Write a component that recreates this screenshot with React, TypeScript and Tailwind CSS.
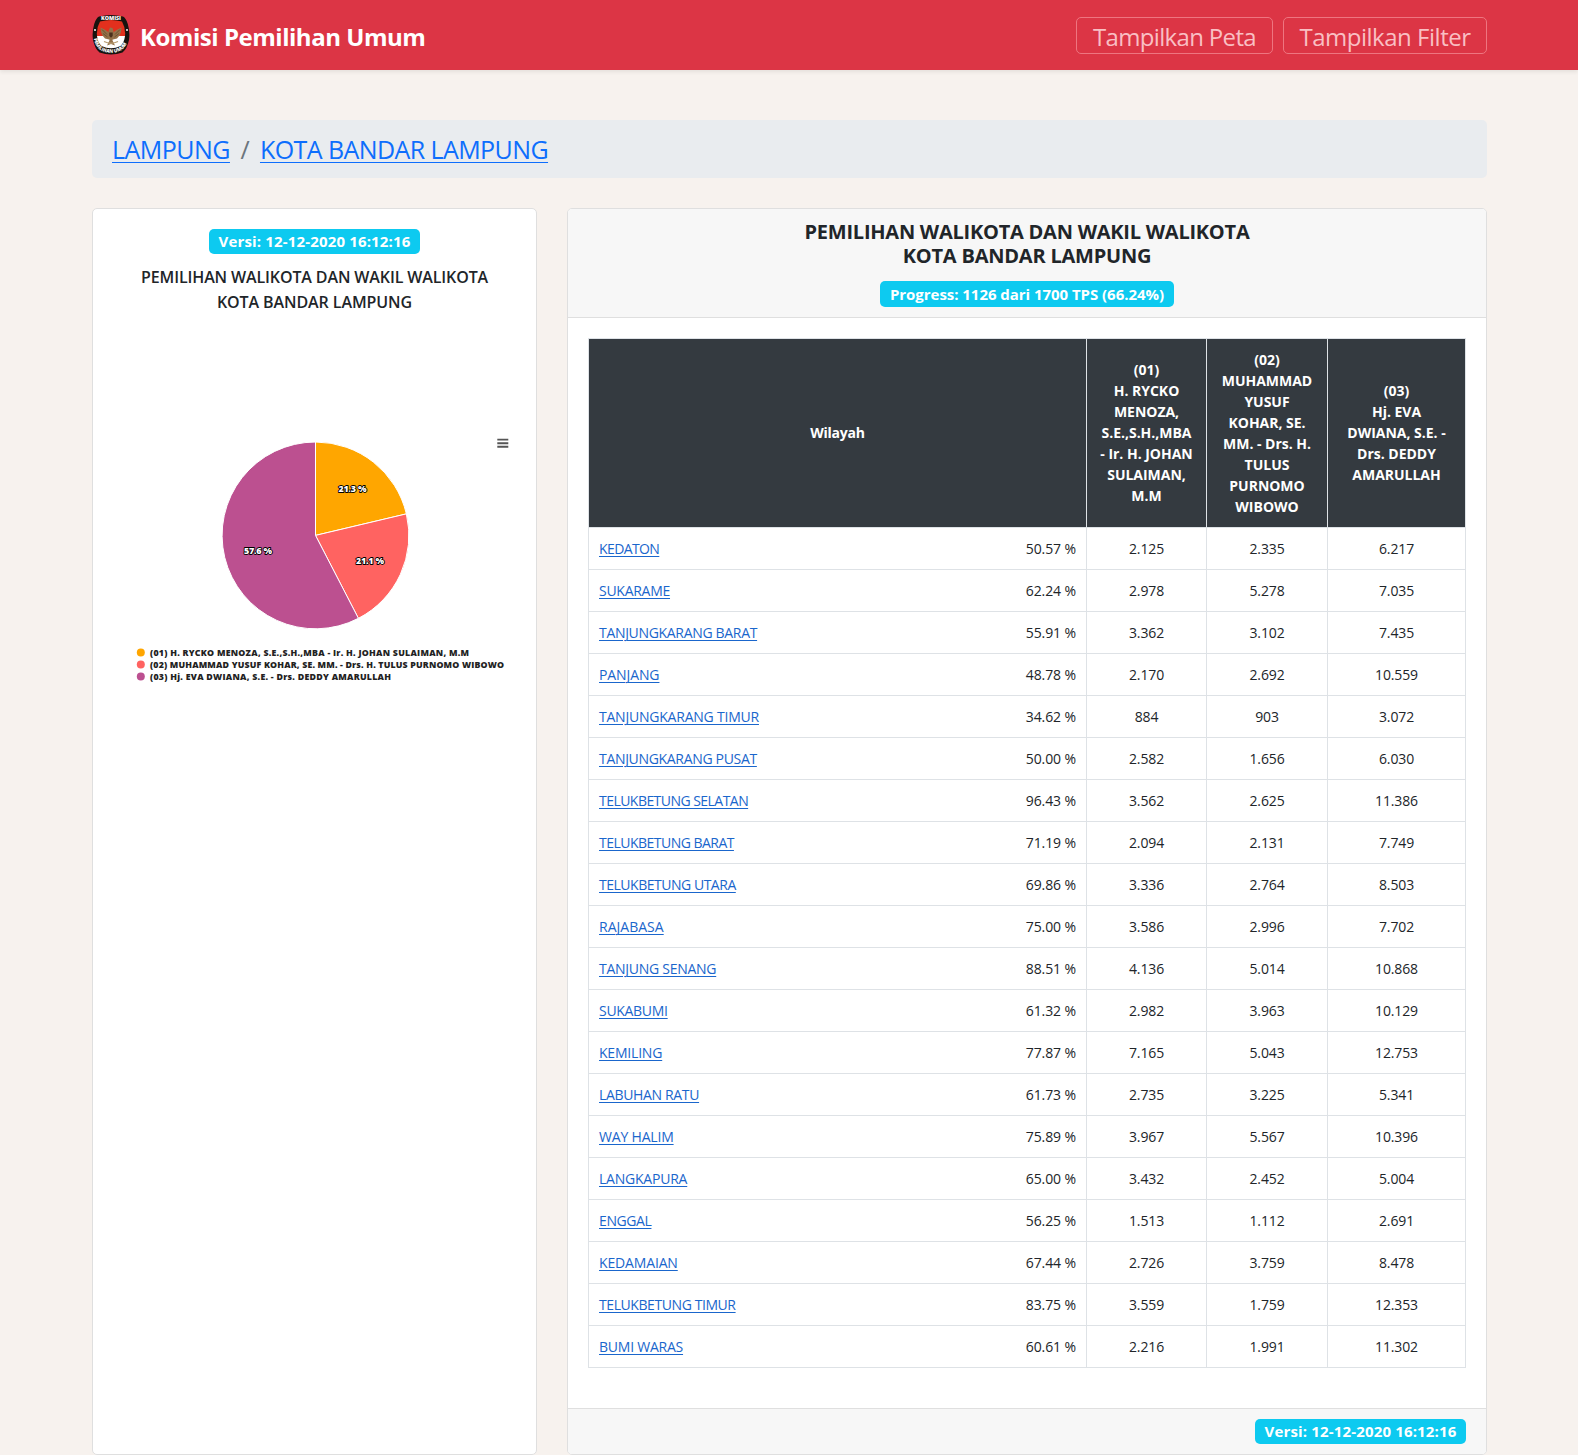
type Row = { name: string; track: string; progress: string; votes: string[] };

const rows: Row[] = [
  { name: 'KEDATON', track: 'tracking-[-0.6px]', progress: '50.57', votes: ['2.125', '2.335', '6.217'] },
  { name: 'SUKARAME', track: 'tracking-[-0.27px]', progress: '62.24', votes: ['2.978', '5.278', '7.035'] },
  { name: 'TANJUNGKARANG BARAT', track: 'tracking-[-0.32px]', progress: '55.91', votes: ['3.362', '3.102', '7.435'] },
  { name: 'PANJANG', track: 'tracking-[-0.1px]', progress: '48.78', votes: ['2.170', '2.692', '10.559'] },
  { name: 'TANJUNGKARANG TIMUR', track: 'tracking-[-0.22px]', progress: '34.62', votes: ['884', '903', '3.072'] },
  { name: 'TANJUNGKARANG PUSAT', track: 'tracking-[-0.32px]', progress: '50.00', votes: ['2.582', '1.656', '6.030'] },
  { name: 'TELUKBETUNG SELATAN', track: 'tracking-[-0.54px]', progress: '96.43', votes: ['3.562', '2.625', '11.386'] },
  { name: 'TELUKBETUNG BARAT', track: 'tracking-[-0.52px]', progress: '71.19', votes: ['2.094', '2.131', '7.749'] },
  { name: 'TELUKBETUNG UTARA', track: 'tracking-[-0.48px]', progress: '69.86', votes: ['3.336', '2.764', '8.503'] },
  { name: 'RAJABASA', track: 'tracking-[0.02px]', progress: '75.00', votes: ['3.586', '2.996', '7.702'] },
  { name: 'TANJUNG SENANG', track: 'tracking-[-0.27px]', progress: '88.51', votes: ['4.136', '5.014', '10.868'] },
  { name: 'SUKABUMI', track: 'tracking-[-0.3px]', progress: '61.32', votes: ['2.982', '3.963', '10.129'] },
  { name: 'KEMILING', track: 'tracking-[-0.2px]', progress: '77.87', votes: ['7.165', '5.043', '12.753'] },
  { name: 'LABUHAN RATU', track: 'tracking-[-0.34px]', progress: '61.73', votes: ['2.735', '3.225', '5.341'] },
  { name: 'WAY HALIM', track: 'tracking-[-0.18px]', progress: '75.89', votes: ['3.967', '5.567', '10.396'] },
  { name: 'LANGKAPURA', track: 'tracking-[-0.22px]', progress: '65.00', votes: ['3.432', '2.452', '5.004'] },
  { name: 'ENGGAL', track: 'tracking-[-0.4px]', progress: '56.25', votes: ['1.513', '1.112', '2.691'] },
  { name: 'KEDAMAIAN', track: 'tracking-[-0.15px]', progress: '67.44', votes: ['2.726', '3.759', '8.478'] },
  { name: 'TELUKBETUNG TIMUR', track: 'tracking-[-0.42px]', progress: '83.75', votes: ['3.559', '1.759', '12.353'] },
  { name: 'BUMI WARAS', track: 'tracking-[-0.23px]', progress: '60.61', votes: ['2.216', '1.991', '11.302'] },
];

const candidates = [
  ['(01)', 'H. RYCKO', 'MENOZA,', 'S.E.,S.H.,MBA', '- Ir. H. JOHAN', 'SULAIMAN,', 'M.M'],
  ['(02)', 'MUHAMMAD', 'YUSUF', 'KOHAR, SE.', 'MM. - Drs. H.', 'TULUS', 'PURNOMO', 'WIBOWO'],
  ['(03)', 'Hj. EVA', 'DWIANA, S.E. -', 'Drs. DEDDY', 'AMARULLAH'],
];

const slices = [
  {
    share: 21.3, color: '#ffa600', lx: 352.5, ly: 492.3, width: 319,
    label: '(01) H. RYCKO MENOZA, S.E.,S.H.,MBA - Ir. H. JOHAN SULAIMAN, M.M',
  },
  {
    share: 21.1, color: '#ff6361', lx: 370, ly: 564.3, width: 354,
    label: '(02) MUHAMMAD YUSUF KOHAR, SE. MM. - Drs. H. TULUS PURNOMO WIBOWO',
  },
  {
    share: 57.6, color: '#bc5090', lx: 258, ly: 554.3, width: 241,
    label: '(03) Hj. EVA DWIANA, S.E. - Drs. DEDDY AMARULLAH',
  },
];

const CX = 315.5;
const CY = 535.4;
const R = 93.4;

function point(percent: number) {
  const a = (percent / 100) * Math.PI * 2;
  return `${(CX + R * Math.sin(a)).toFixed(2)} ${(CY - R * Math.cos(a)).toFixed(2)}`;
}

function PieChart() {
  let start = 0;
  return (
    <svg viewBox="93 410 443 290" width="443" height="290" className="block">
      {slices.map((s) => {
        const from = start;
        start += s.share;
        return (
          <path
            key={s.color}
            d={`M${CX} ${CY}L${point(from)}A${R} ${R} 0 ${s.share > 50 ? 1 : 0} 1 ${point(start)}Z`}
            fill={s.color}
            stroke="#fff"
            strokeWidth="1"
            strokeLinejoin="round"
          />
        );
      })}
      {slices.map((s) => (
        <text
          key={s.color}
          x={s.lx}
          y={s.ly}
          textAnchor="middle"
          textLength="28"
          fontSize="9"
          fontWeight="800"
          fill="#fff"
          stroke="#000"
          strokeWidth="1.8"
          strokeLinejoin="round"
          paintOrder="stroke"
        >
          {s.share.toFixed(1)} %
        </text>
      ))}
      {slices.map((s, i) => (
        <g key={s.color}>
          <circle cx="140.8" cy={652.4 + i * 12.1} r="4" fill={s.color} />
          <text x="150" y={656.2 + i * 12} textLength={s.width} fontSize="8.8" fontWeight="800" fill="#222">
            {s.label}
          </text>
        </g>
      ))}
      <path d="M497.300 439.600h11M497.300 443.200h11M497.300 446.800h11" stroke="#555" strokeWidth="1.9" />
    </svg>
  );
}

function Logo() {
  return (
    <svg viewBox="0 0 38 40" className="h-10 w-[38px]">
      <defs>
        <clipPath id="shield">
          <path d="M8 6.500Q19 3.500 30 6.500Q33.800 13 33 21Q32.300 27.500 28.500 31Q19 35.500 9.500 31Q5.700 27.500 5 21Q4.200 13 8 6.500Z" />
        </clipPath>
        <path id="arc" d="M1.800 23.500Q3.500 31.500 8.500 35.200Q19 40.500 29.500 35.200Q34.500 31.500 36.200 23.500" />
      </defs>
      <path d="M7 1.500Q19-1.500 31 1.500Q34 3 35.800 9Q38.200 17 37 25Q35 34 30.500 37.500Q19 41.500 7.500 37.500Q3 34 1 25Q-0.200 17 2.200 9Q4 3 7 1.500Z" fill="#17130f" />
      <g clipPath="url(#shield)">
        <path d="M3 3h32v18.500H3z" fill="#e2301d" />
        <path d="M3 21h32v15H3z" fill="#fff" />
      </g>
      <g fill="#94714a">
        <path d="M17 17.500L13.500 15 8.500 12.500 9 17 10.500 20.500 13 23.500 17 24.500zM21 17.500L24.500 15 29.500 12.500 29 17 27.500 20.500 25 23.500 21 24.500z" />
        <path d="M18 12.500L20.500 13 21.500 16V22L20.500 25.500 23 30.500 19 29 15 30.500 17.500 25.500 16.500 22V16z" />
      </g>
      <path d="M10 14.500l5 5M11 18.500l4.500 3.500M28 14.500l-5 5M27 18.500l-4.500 3.500" stroke="#5f4526" strokeWidth="0.700" />
      <path d="M12 26.500Q19 30 26 26.500" stroke="#b59a70" strokeWidth="1.300" fill="none" />
      <path d="M17.300 17.500h3.400v3.500L19 22.800l-1.700-1.800z" fill="#4b301c" />
      <circle cx="3" cy="15" r="1" fill="#fff" />
      <circle cx="35" cy="15" r="1" fill="#fff" />
      <text x="19" y="5.400" textAnchor="middle" textLength="20" fontSize="5.400" fontWeight="800" fill="#fff">KOMISI</text>
      <text fontSize="5" fontWeight="800" fill="#fff">
        <textPath href="#arc" textLength="44" lengthAdjust="spacingAndGlyphs">PEMILIHAN UMUM</textPath>
      </text>
    </svg>
  );
}

function Badge({ children, className }: { children: string; className: string }) {
  return (
    <span
      className={`flex items-center justify-center rounded-[5px] bg-[#0dcaf0] text-[15px] font-bold whitespace-nowrap text-white ${className}`}
    >
      {children}
    </span>
  );
}

export default function App() {
  return (
    <div className="h-[1455px] overflow-hidden bg-[#f7f2ee] font-['Open_Sans','Noto_Sans',sans-serif] text-[#212529]">
      <nav className="flex h-[70px] items-center justify-between bg-[#dc3545] pr-[91px] pl-[92px] shadow-[0_2px_4px_rgba(0,0,0,0.075)]">
        <div className="flex items-center">
          <Logo />
          <span className="ml-[10px] pt-1 text-[24px] leading-9 font-bold tracking-[-0.47px] whitespace-nowrap text-white">
            Komisi Pemilihan Umum
          </span>
        </div>
        <div className="flex gap-[10px] pt-px text-[24px] leading-none text-[#f9bfc3]">
          <button className="flex h-[37px] w-[197px] items-center justify-center rounded-[5px] border border-[#ee7580] pt-[3px] tracking-[-0.66px] whitespace-nowrap">
            Tampilkan Peta
          </button>
          <button className="flex h-[37px] w-[204px] items-center justify-center rounded-[5px] border border-[#ee7580] pt-[3px] tracking-[-0.48px] whitespace-nowrap">
            Tampilkan Filter
          </button>
        </div>
      </nav>

      <main className="mr-[91px] ml-[92px] pt-[50px]">
        <div className="flex h-[58px] items-center rounded-[5px] bg-[#e9ecef] pt-[2px] pl-5 text-[25px] whitespace-nowrap">
          <a href="#" className="tracking-[-0.52px] text-[#0d6efd] underline decoration-1 underline-offset-[3px]">LAMPUNG</a>
          <span className="w-[30px] text-center text-[#6c757d]">/</span>
          <a href="#" className="tracking-[-0.58px] text-[#0d6efd] underline decoration-1 underline-offset-[3px]">KOTA BANDAR LAMPUNG</a>
        </div>

        <div className="mt-[30px] flex gap-[30px]">
          <section className="flex h-[1247px] w-[445px] shrink-0 flex-col items-center rounded-[5px] border border-[#dfdfdf] bg-white pt-5">
            <Badge className="h-[25px] w-[211px] tracking-[0.16px]">Versi: 12-12-2020 16:12:16</Badge>
            <h2 className="mt-[11px] text-center text-[16px] leading-[25px] font-semibold whitespace-nowrap">
              <span className="block tracking-[-0.12px]">PEMILIHAN WALIKOTA DAN WAKIL WALIKOTA</span>
              <span className="block tracking-[-0.09px]">KOTA BANDAR LAMPUNG</span>
            </h2>
            <div className="mt-[95px]">
              <PieChart />
            </div>
          </section>

          <section className="flex h-[1247px] flex-1 flex-col rounded-[5px] border border-[#dfdfdf] bg-white">
            <header className="flex h-[109px] flex-col items-center rounded-t-[4px] border-b border-[#dfdfdf] bg-[#f7f7f7] pt-[11px]">
              <h1 className="text-center text-[20px] leading-6 font-bold whitespace-nowrap">
                <span className="block tracking-[-0.24px]">PEMILIHAN WALIKOTA DAN WAKIL WALIKOTA</span>
                <span className="block tracking-[-0.22px]">KOTA BANDAR LAMPUNG</span>
              </h1>
              <Badge className="mt-[13px] h-[26px] w-[294px] tracking-[-0.04px]">Progress: 1126 dari 1700 TPS (66.24%)</Badge>
            </header>

            <div className="px-5 pt-5">
              <table className="w-[878px] table-fixed border-collapse text-[14px] leading-[21px]">
                <colgroup>
                  <col className="w-[498px]" />
                  <col className="w-[120px]" />
                  <col className="w-[121px]" />
                  <col className="w-[138px]" />
                </colgroup>
                <thead>
                  <tr className="h-[189px] bg-[#343a40] text-center text-white">
                    <th className="border border-[#dee2e6] px-0 pt-0 pb-[2px] font-bold tracking-[-0.25px]">Wilayah</th>
                    {candidates.map((lines) => (
                      <th key={lines[0]} className="border border-[#dee2e6] px-0 pt-0 pb-px font-bold tracking-[-0.02px] whitespace-nowrap">
                        {lines.map((line) => (
                          <span key={line} className="block">{line}</span>
                        ))}
                      </th>
                    ))}
                  </tr>
                </thead>
                <tbody>
                  {rows.map((row) => (
                    <tr key={row.name} className="h-[42px]">
                      <td className="border border-[#dee2e6] px-[10px] py-0">
                        <div className="flex justify-between">
                          <a href="#" className={`text-[#1a66cc] underline decoration-1 underline-offset-2 ${row.track}`}>{row.name}</a>
                          <span className="tracking-[-0.1px]">{row.progress} %</span>
                        </div>
                      </td>
                      {row.votes.map((v, i) => (
                        <td key={i} className="border border-[#dee2e6] p-0 text-center tracking-[-0.12px]">{v}</td>
                      ))}
                    </tr>
                  ))}
                </tbody>
              </table>
            </div>

            <footer className="mt-auto flex h-[46px] items-center justify-end rounded-b-[4px] border-t border-[#dfdfdf] bg-[#f7f7f7] pr-5">
              <Badge className="h-[25px] w-[211px] tracking-[0.16px]">Versi: 12-12-2020 16:12:16</Badge>
            </footer>
          </section>
        </div>
      </main>
    </div>
  );
}
